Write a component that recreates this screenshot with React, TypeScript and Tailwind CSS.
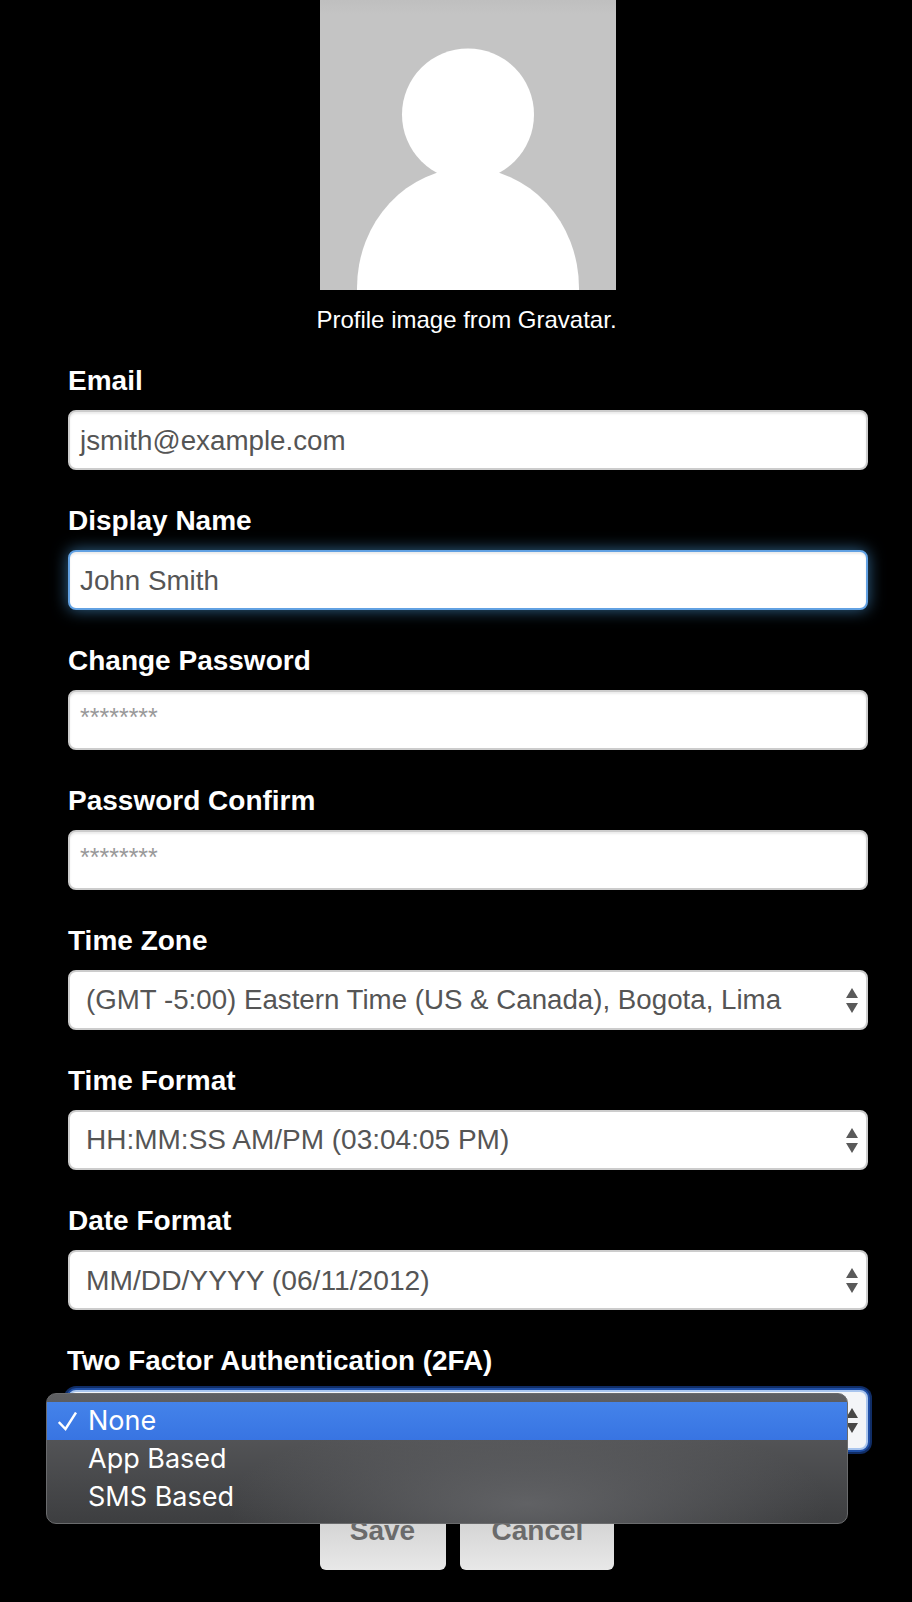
import React from "react";

const sans = "font-['Liberation_Sans',Arial,sans-serif]";

function Arrows({ dark }: { dark?: boolean }) {
  const fill = dark ? "#474747" : "#5a5a5a";
  return (
    <svg width="12" height="25" viewBox="0 0 12 25" className="shrink-0">
      <path d="M6 0 L12 10 H0 Z" fill={fill} />
      <path d="M6 25 L12 15 H0 Z" fill={fill} />
    </svg>
  );
}

function Label({ children }: { children: React.ReactNode }) {
  return <div className="h-[60px] pt-[15px] text-[28px] leading-[32px] font-bold text-white">{children}</div>;
}

function TextBox({ value, focus, placeholder }: { value: string; focus?: boolean; placeholder?: boolean }) {
  return (
    <div
      className={
        "h-[60px] rounded-[8px] border-2 bg-white pl-[10px] flex items-center " +
        (focus
          ? "border-[#62a1e2] shadow-[inset_0_2px_2px_rgba(0,0,0,0.075),0_0_16px_rgba(82,168,236,0.6)] text-[#555555] text-[27.75px] pt-px"
          : placeholder
            ? "border-[#cccccc] shadow-[inset_0_2px_2px_rgba(0,0,0,0.075)] text-[#999999] text-[25px] pb-[4px]"
            : "border-[#cccccc] shadow-[inset_0_2px_2px_rgba(0,0,0,0.075)] text-[#555555] text-[27.75px] pt-px")
      }
    >
      {value}
    </div>
  );
}

function SelectBox({ value, textClass }: { value: string; textClass: string }) {
  return (
    <div className={"h-[60px] rounded-[8px] border-2 border-[#cccccc] bg-white pl-[16px] pr-[8px] flex items-center justify-between text-[#555555] " + textClass}>
      <span>{value}</span>
      <Arrows />
    </div>
  );
}

export default function App() {
  return (
    <div className={"relative w-[912px] h-[1602px] overflow-hidden bg-black " + sans}>
      <div className="flex flex-col items-center pl-[24px]">
        <svg width="296" height="290" viewBox="0 0 296 290" className="block">
          <defs>
            <filter id="soft"><feGaussianBlur stdDeviation="0.6" /></filter>
            <linearGradient id="bgfade" x1="0" y1="0" x2="0" y2="1">
              <stop offset="0" stopColor="#bfbfbf" />
              <stop offset="0.05" stopColor="#c4c4c4" />
              <stop offset="1" stopColor="#c4c4c4" />
            </linearGradient>
          </defs>
          <rect width="296" height="290" fill="url(#bgfade)" />
          <g filter="url(#soft)" fill="#ffffff">
            <circle cx="148" cy="114.5" r="66" />
            <ellipse cx="148" cy="288" rx="111" ry="120" />
          </g>
        </svg>
        <div className="mt-[16px] pr-[3px] text-[24px] leading-[28px] text-white">Profile image from Gravatar.</div>
      </div>

      <div className="mt-[16px] mx-[68px] w-[800px] flex flex-col gap-[20px]">
        <div><Label>Email</Label><TextBox value="jsmith@example.com" /></div>
        <div><Label>Display Name</Label><TextBox value="John Smith" focus /></div>
        <div><Label>Change Password</Label><TextBox value="********" placeholder /></div>
        <div><Label>Password Confirm</Label><TextBox value="********" placeholder /></div>
        <div><Label>Time Zone</Label><SelectBox textClass="text-[27.7px]" value="(GMT -5:00) Eastern Time (US & Canada), Bogota, Lima" /></div>
        <div><Label>Time Format</Label><SelectBox textClass="text-[28px]" value="HH:MM:SS AM/PM (03:04:05 PM)" /></div>
        <div><Label>Date Format</Label><SelectBox textClass="text-[28.2px]" value="MM/DD/YYYY (06/11/2012)" /></div>
        <div>
          <Label><span className="-ml-px text-[27.85px]">Two Factor Authentication (2FA)</span></Label>
          <div className="h-[60px] rounded-[8px] border-2 border-[#a9c5ee] bg-[#f3f5f8] pr-[8px] flex items-center justify-end shadow-[0_0_0_2px_#1f4fa6,0_0_0_4px_#102d66]">
            <Arrows dark />
          </div>
        </div>
      </div>

      <div className="mt-[42px] flex justify-center gap-[14px] pl-[21px]">
        <div className="w-[126px] h-[78px] rounded-[6px] bg-[linear-gradient(#c8c8c8,#e8e8e8)] flex items-center justify-center text-[28px] font-bold text-[#6b6b6b]">Save</div>
        <div className="w-[154px] h-[78px] rounded-[6px] bg-[linear-gradient(#c8c8c8,#e8e8e8)] flex items-center justify-center pl-[2px] text-[28px] font-bold text-[#6b6b6b]">Cancel</div>
      </div>

      <div className="absolute left-[46px] top-[1393px] w-[802px] h-[131px] rounded-[10px] border border-[#6a6b6d] pt-[8px] font-['Inter',sans-serif] text-[27px] leading-[38px] text-white bg-[radial-gradient(ellipse_300px_90px_at_60%_85%,rgba(100,101,104,0.9),rgba(100,101,104,0)),linear-gradient(#5e5f62,#3d3e40)]">
        <div className="relative h-[38px] pl-[41px] bg-[linear-gradient(#4483ea,#3874e2)]">
          <svg width="20" height="20" viewBox="0 0 20 20" className="absolute left-[11px] top-[10px]">
            <path d="M0.8 10 L7.5 17 L18 0.5" fill="none" stroke="#ffffff" strokeWidth="2.4" />
          </svg>
          None
        </div>
        <div className="h-[38px] pl-[41px]">App Based</div>
        <div className="h-[38px] pl-[41px]">SMS Based</div>
      </div>
    </div>
  );
}
